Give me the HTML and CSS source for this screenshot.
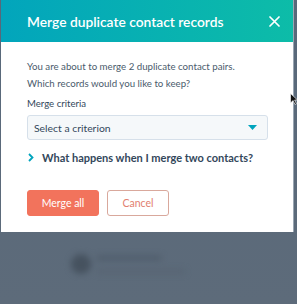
FILE: index.html
```html
<!DOCTYPE html>
<html>
<head>
<meta charset="utf-8">
<link rel="stylesheet" href="styles.css">
</head>
<body>
<div class="page">
  <div class="dialog">
    <div class="header">
      <span class="title">Merge duplicate contact records</span>
      <svg class="close" width="11" height="11" viewBox="0 0 11 11"><path d="M1 1L10 10M10 1L1 10" stroke="#fff" stroke-width="1.7" stroke-linecap="round"/></svg>
    </div>
    <div class="body">
      <p class="intro">You are about to merge 2 duplicate contact pairs.<br>Which records would you like to keep?</p>
      <div class="label">Merge criteria</div>
      <div class="select">
        <span>Select a criterion</span>
        <svg width="9" height="5" viewBox="0 0 9 5"><path d="M0 0H9L4.5 5Z" fill="#00a4bd"/></svg>
      </div>
      <div class="toggle">
        <svg width="6" height="9" viewBox="0 0 6 9"><path d="M1 1L4.5 4.5L1 8" stroke="#00a4bd" stroke-width="1.8" fill="none"/></svg>
        <span>What happens when I merge two contacts?</span>
      </div>
      <div class="buttons">
        <button class="btn primary">Merge all</button>
        <button class="btn secondary">Cancel</button>
      </div>
    </div>
  </div>
  <div class="behind">
    <div class="avatar"></div>
    <div class="lines"><div class="l1"></div><div class="l2"></div></div>
  </div>
  <svg class="cursor" width="8" height="12" viewBox="0 0 8 12"><path d="M0.5 0.5V10L3 7.5L5 11.5L6.5 10.8L4.6 7H7.5Z" fill="#111" stroke="#fff" stroke-width="0.6"/></svg>
</div>
</body>
</html>
```
FILE: styles.css
```css
html, body { margin: 0; padding: 0; }
body {
  width: 297px;
  height: 304px;
  overflow: hidden;
  background: #5b6a79;
  font-family: Lato, "Open Sans", sans-serif;
}
.page {
  position: relative;
  width: 297px;
  height: 304px;
  padding: 0 3px 0 1px;
  box-sizing: border-box;
  background: linear-gradient(#58687a, #5d6b7a);
}
.dialog {
  background: #fff;
  height: 232px;
  display: flex;
  flex-direction: column;
  border-right: 1px solid #9aa6b2;
}
.header {
  height: 42px;
  background: linear-gradient(90deg, #02a5bc, #0dbca8);
  display: flex;
  align-items: center;
  justify-content: space-between;
  padding: 0 13px 0 26px;
}
.title {
  color: #fff;
  font-size: 13.8px;
  font-weight: 600;
}
.close { display: block; }
.body {
  padding: 16px 25px 0 26px;
  color: #33475b;
}
.intro {
  margin: 0;
  font-size: 9.7px;
  line-height: 17px;
  color: #4a5b6c;
}
.label {
  margin-top: 3px;
  font-size: 9.6px;
  line-height: 17px;
  color: #33475b;
}
.select {
  margin-top: 3px;
  height: 25px;
  box-sizing: border-box;
  border: 1px solid #d6e0ea;
  border-radius: 3px;
  background: #f5f8fa;
  display: flex;
  align-items: center;
  justify-content: space-between;
  padding: 0 10px 0 6px;
  font-size: 10.4px;
  color: #33475b;
}
.select svg { display: block; }
.toggle {
  margin-top: 8px;
  display: flex;
  align-items: center;
  gap: 8px;
  padding-left: 1px;
  font-size: 11px;
  font-weight: 700;
  color: #33475b;
  height: 18px;
}
.toggle svg { display: block; }
.buttons {
  margin-top: 24px;
  display: flex;
  gap: 8px;
}
.btn {
  height: 26px;
  border-radius: 3px;
  font-family: Lato, sans-serif;
  font-size: 10.5px;
  padding: 0;
  box-sizing: border-box;
}
.primary {
  width: 72px;
  background: #f2735c;
  border: 1px solid #f2735c;
  color: #fff;
}
.secondary {
  width: 62px;
  background: #fff;
  border: 1px solid #d9a89c;
  color: #e2806f;
}
.behind {
  display: flex;
  align-items: center;
  gap: 6px;
  padding: 22px 0 0 70px;
  filter: blur(3px);
}
.avatar {
  width: 20px;
  height: 20px;
  border-radius: 50%;
  background: #46525f;
}
.lines { display: flex; flex-direction: column; gap: 10px; }
.l1 { width: 64px; height: 4px; background: #4d5a68; }
.l2 { width: 88px; height: 3px; background: #556270; }
.cursor {
  position: absolute;
  left: 290px;
  top: 93px;
}
```
